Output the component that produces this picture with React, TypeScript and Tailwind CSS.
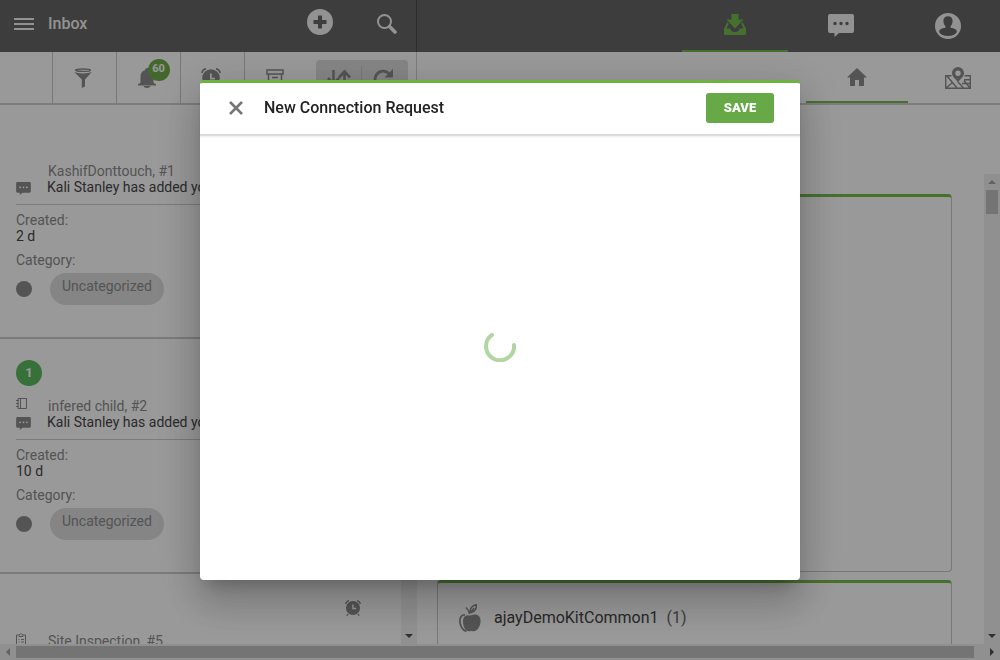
import type { ReactNode } from "react";

type IconProps = { className?: string };

const MenuIcon = () => (
  <svg viewBox="0 0 20 14" className="h-[14px] w-5" fill="currentColor">
    <path d="M0 1h20v2H0zM0 6h20v2H0zM0 11h20v2H0z" />
  </svg>
);

const AddIcon = () => (
  <svg viewBox="0 0 26 26" className="size-[26px]" fill="currentColor" fillRule="evenodd">
    <path d="M13 0a13 13 0 1 1 0 26a13 13 0 0 1 0-26zM11 6.500v4.500H6.500v4H11v4.500h4V15h4.500v-4H15V6.500z" />
  </svg>
);

const SearchIcon = () => (
  <svg viewBox="0 0 20 20" className="size-5" fill="none" stroke="currentColor">
    <circle cx="7.500" cy="7.500" r="6.500" strokeWidth="2" />
    <path d="M12.500 12.500l5.500 5.500" strokeWidth="3.600" strokeLinecap="round" />
  </svg>
);

const InboxIcon = () => (
  <svg viewBox="0 0 22 21" className="h-[21px] w-[22px]" fill="currentColor">
    <path d="M7.500 0h7v5.500h5L11 14.500L2.500 5.500h5z" />
    <path d="M3.500 8L0 14.800v4.700Q0 21 1.500 21h19q1.500 0 1.500-1.500v-4.700L18.500 8l-1.300 1.500l2.300 5H16l-1.500 2.500q-3.500 2-7 0L6 14.500H2.500l2.300-5z" />
  </svg>
);

const ChatIcon = ({ className = "" }: IconProps) => (
  <svg viewBox="0 0 26 23" className={className} fill="currentColor" fillRule="evenodd">
    <path d="M2 0h22q2 0 2 2v15q0 2-2 2H11l-4.500 4v-4H2q-2 0-2-2V2Q0 0 2 0zM7 7.800a1.700 1.700 0 1 0 0 3.400a1.700 1.700 0 0 0 0-3.400zM13 7.800a1.700 1.700 0 1 0 0 3.400a1.700 1.700 0 0 0 0-3.400zM19 7.800a1.700 1.700 0 1 0 0 3.400a1.700 1.700 0 0 0 0-3.400z" />
  </svg>
);

const AccountIcon = () => (
  <svg viewBox="0 0 26 26" className="size-[26px]" fill="currentColor" fillRule="evenodd">
    <path d="M13 0a13 13 0 1 1 0 26a13 13 0 0 1 0-26zM13 3.200c-3 0-4.600 2-4.600 4.700c0 2.300.8 4 2 5.200v1.600c-3.600.6-6.200 1.800-6.200 3.600c0 2.900 4.700 4.700 8.800 4.700s8.800-1.800 8.800-4.700c0-1.800-2.600-3-6.200-3.600v-1.600c1.200-1.200 2-2.900 2-5.200c0-2.700-1.600-4.700-4.600-4.700z" />
  </svg>
);

const FilterIcon = () => (
  <svg viewBox="0 0 18 20" className="h-5 w-[18px]" fill="currentColor">
    <ellipse cx="9" cy="2.200" rx="7.400" ry="1.200" fill="none" stroke="currentColor" strokeWidth="1.400" />
    <path d="M.2 4q3 1.400 8.800 1.400T17.800 4L11 11.500v7L7.800 20v-8.500z" />
  </svg>
);

const BellIcon = () => (
  <svg viewBox="0 0 18 20" className="h-5 w-[18px]" fill="currentColor">
    <path d="M9 0q2 0 2 2.300q4.500 1.200 4.500 6.200v5.500q0 1.500 2.500 2v1.500H0V16q2.500-.5 2.500-2V8.500Q2.500 3.500 7 2.300Q7 0 9 0z" />
    <path d="M5.500 18h7q-.5 2-3.500 2t-3.500-2z" />
  </svg>
);

const AlarmIcon = ({ className = "" }: IconProps) => (
  <svg viewBox="0 0 20 20" className={className} fill="currentColor" fillRule="evenodd">
    <path d="M10 1.200a8.800 8.800 0 1 1 0 17.600a8.800 8.800 0 0 1 0-17.600zM9 5.500v6h5v-1.800H10.800V5.500z" />
    <path d="M.8 5Q1.500 1.500 5 .8M19.200 5Q18.500 1.500 15 .8M4 17.500l-2 2M16 17.500l2 2" fill="none" stroke="currentColor" strokeWidth="1.600" />
  </svg>
);

const ArchiveIcon = () => (
  <svg viewBox="0 0 18 18" className="size-[18px]" fill="none" stroke="currentColor" strokeWidth="1.500">
    <path d="M1 1h16v4H1zM2.500 5v12h13V5M6 8.500h6" />
  </svg>
);

const SortIcon = () => (
  <svg viewBox="0 0 24 18" className="h-[18px] w-6" fill="none" stroke="currentColor" strokeWidth="2.600">
    <path d="M6.500 1v14M1 9l5.500 6l5.500-6M17.500 17V3M12 8.500l5.500-6l5.500 6" />
  </svg>
);

const RefreshIcon = () => (
  <svg viewBox="0 0 20 20" className="size-5" fill="none" stroke="currentColor" strokeWidth="2.800">
    <path d="M16.500 6.500A8 8 0 1 0 18 12" />
    <path d="M20 1v8.500h-8.500z" fill="currentColor" stroke="none" />
  </svg>
);

const HomeIcon = () => (
  <svg viewBox="0 0 20 18" className="h-[18px] w-5" fill="currentColor">
    <path d="M10 0l10 9.500h-3V18h-5v-6H8v6H3V9.500H0z" />
  </svg>
);

const MapIcon = () => (
  <svg viewBox="0 0 26 22" className="h-[22px] w-[26px]" fill="none" stroke="currentColor" strokeWidth="1.400">
    <path d="M6.500 8.700H.7v12.600h24.600V8.700h-5.800M2 9l10 12M7.500 15.500L1 21M13 15l5.500 6M25 12.700h-6M25 16.500h-8M19 13.500l6 7.500" />
    <path d="M13 0a6 6 0 0 1 6 6c0 4-4 6-6 9.500C11 12 7 10 7 6a6 6 0 0 1 6-6zM13 3.500a2.700 2.700 0 1 0 0 5.400a2.700 2.700 0 0 0 0-5.400z" fill="currentColor" fillRule="evenodd" stroke="none" />
  </svg>
);

const NotebookIcon = () => (
  <svg viewBox="0 0 11 11" className="size-[11px]" fill="none" stroke="currentColor">
    <path d="M2 .5h8.500v10H2zM4.500 .5v10M0 2.500h3M0 5.500h3M0 8.500h3" />
  </svg>
);

const ClipboardIcon = () => (
  <svg viewBox="0 0 10 13" className="h-[13px] w-[10px]" fill="none" stroke="currentColor">
    <path d="M2.500 2H.5v10.500h9V2h-2M3 3.500h4v-2H6L5 .5l-1 1H3zM2.500 6.500h1M5 6.500h3M2.500 9h1M5 9h3" />
  </svg>
);

const AppleIcon = () => (
  <svg viewBox="0 0 22 28" className="h-7 w-[22px]" fill="currentColor">
    <path d="M8.500 11.200q2.500 1 5.500-.4c4-1.400 7.600 1.200 7.600 6c0 6-3.800 11-7.200 10.400q-2-.6-3.800 0c-5 .8-7-7-6.600-11q.6-4.600 4.500-5z" />
    <path d="M6 10.800C2 10.600.9 14 .9 17c0 4.500 3 10 6.600 10.200" fill="none" stroke="currentColor" strokeWidth="1.800" />
    <path d="M10.500 10Q10 6 7 3.500M11 8.500Q11 2 17.200.8Q18 7 11.500 8.800L15 4" fill="none" stroke="currentColor" strokeWidth="1.500" />
  </svg>
);

const CloseIcon = () => (
  <svg viewBox="0 0 14 14" className="size-[14px]" fill="none" stroke="currentColor" strokeWidth="2.600">
    <path d="M1 1l12 12M13 1L1 13" />
  </svg>
);

const Spinner = () => (
  <svg viewBox="0 0 32 32" className="size-8" fill="none" stroke="#b1d6a3" strokeWidth="4" strokeLinecap="round" role="status">
    <path d="M8 4.800A14 14 0 1 0 30 15" />
  </svg>
);

const arrowPaths = {
  up: "M4 10l4-4l4 4z",
  down: "M4 6l4 4l4-4z",
  left: "M10 4l-4 4l4 4z",
  right: "M6 4l4 4l-4 4z",
};

function ScrollArrow({ dir, active = false }: { dir: keyof typeof arrowPaths; active?: boolean }) {
  return (
    <svg viewBox="0 0 16 16" className={active ? "size-4 shrink-0 text-[#505050]" : "size-4 shrink-0 text-[#a3a3a3]"} fill="currentColor">
      <path d={arrowPaths[dir]} />
    </svg>
  );
}

function VerticalScrollbar({ thumb }: { thumb: string }) {
  return (
    <div className="flex w-4 shrink-0 flex-col bg-[#f1f1f1]">
      <ScrollArrow dir="up" />
      <div className="flex-1 px-0.5">
        <div className={`bg-[#c1c1c1] ${thumb}`} />
      </div>
      <ScrollArrow dir="down" active />
    </div>
  );
}

function Tool({ label, children }: { label: string; children: ReactNode }) {
  return (
    <button aria-label={label} className="flex h-full w-16 items-center justify-center border-l border-[#c8c8c8] pr-1">
      {children}
    </button>
  );
}

type Item = { name: string; icon?: ReactNode; count?: number; alarm?: boolean; age: string };

const items: Item[] = [
  { name: "KashifDonttouch, #1", age: "2 d" },
  { name: "infered child, #2", icon: <NotebookIcon />, count: 1, age: "10 d" },
  { name: "Site Inspection, #5", icon: <ClipboardIcon />, alarm: true, age: "" },
];

function InboxItem({ item }: { item: Item }) {
  return (
    <li className="border-b-2 border-[#cdcdcd] px-4 pb-8 text-[14px] leading-4 text-[#8c8c8c]">
      <div className="flex h-[59px] items-center justify-between pt-2">
        {item.count ? (
          <span className="flex size-[26px] items-center justify-center rounded-full bg-[#5cbb60] text-[13px] font-bold text-white">{item.count}</span>
        ) : (
          <span />
        )}
        {item.alarm && <AlarmIcon className="mr-6 size-4" />}
      </div>
      <div className="flex h-4">
        <span className="w-8">{item.icon}</span>
        <span>{item.name}</span>
      </div>
      {item.age && (
        <>
          <div className="flex h-[26px] border-b border-[#cdcdcd]">
            <span className="w-[31px] pt-[3px]">
              <ChatIcon className="h-[13px] w-[15px]" />
            </span>
            <span className="text-[#484848]">Kali Stanley has added you</span>
          </div>
          <dl className="pt-[7px]">
            <dt>Created:</dt>
            <dd className="mb-2 text-[#484848]">{item.age}</dd>
            <dt>Category:</dt>
            <dd className="mt-[5px] flex items-center gap-[18px]">
              <span className="size-4 rounded-full bg-[#8c8c8c]" />
              <span className="h-8 rounded-full bg-[#dedede] px-3 pt-[5px]">Uncategorized</span>
            </dd>
          </dl>
        </>
      )}
    </li>
  );
}

export default function App() {
  return (
    <div className="flex h-screen flex-col overflow-hidden bg-white font-['Roboto',sans-serif] text-[#8c8c8c]">
      <div className="flex min-h-0 flex-1">
        <section className="flex w-[417px] shrink-0 flex-col">
          <header className="flex h-[52px] shrink-0 items-center border-r border-[#4a4a4a] bg-[#676767] pr-[19px] pl-[14px] text-[#f4f4f4]">
            <button aria-label="Menu" className="pb-1"><MenuIcon /></button>
            <h1 className="ml-[14px] pb-1 text-[16px] leading-5 font-medium">Inbox</h1>
            <button aria-label="Add" className="ml-auto pb-2"><AddIcon /></button>
            <button aria-label="Search" className="ml-[44px] pb-1"><SearchIcon /></button>
          </header>
          <nav className="flex h-[53px] shrink-0 items-center border-r border-b-2 border-[#d0d0d0] pl-[52px]">
            <Tool label="Filter"><FilterIcon /></Tool>
            <Tool label="Notifications">
              <span className="relative">
                <BellIcon />
                <span className="absolute -top-[9px] left-[10px] flex size-[22px] items-center justify-center rounded-full bg-[#70ad4d] text-[11px] font-bold text-white">60</span>
              </span>
            </Tool>
            <Tool label="Reminders"><AlarmIcon className="size-5" /></Tool>
            <Tool label="Archive"><ArchiveIcon /></Tool>
            <div className="mr-2 ml-auto flex h-9 items-center rounded bg-[#dedede]">
              <button aria-label="Sort" className="flex h-6 w-[46px] items-center justify-center border-r border-[#c8c8c8]"><SortIcon /></button>
              <button aria-label="Refresh" className="flex h-6 w-[46px] items-center justify-center pr-1"><RefreshIcon /></button>
            </div>
          </nav>
          <div className="flex min-h-0 flex-1">
            <ul className="-mt-px min-w-0 flex-1 overflow-hidden">
              {items.map((item) => (
                <InboxItem key={item.name} item={item} />
              ))}
            </ul>
            <VerticalScrollbar thumb="h-16" />
          </div>
        </section>

        <section className="flex min-w-0 flex-1 flex-col">
          <header className="flex h-[52px] shrink-0 justify-end bg-[#676767] text-[#f4f4f4]">
            <button aria-label="Inbox" className="flex w-[106px] items-center justify-center border-b-2 border-[#76bb4e] pb-0.5 text-[#76bb4e]"><InboxIcon /></button>
            <button aria-label="Messages" className="flex w-[106px] items-center justify-center pb-0.5"><ChatIcon className="h-[23px] w-[26px]" /></button>
            <button aria-label="Account" className="flex w-[106px] items-center justify-center pl-0.5"><AccountIcon /></button>
          </header>
          <nav className="flex h-[53px] shrink-0 justify-end border-b-2 border-[#d0d0d0]">
            <button aria-label="Home" className="flex w-[102px] items-center justify-center border-b-2 border-[#76bb4e]"><HomeIcon /></button>
            <button aria-label="Map" className="flex w-[92px] items-center justify-center pl-2"><MapIcon /></button>
          </nav>
          <div className="mt-[69px] flex min-h-0 flex-1">
            <div className="min-w-0 flex-1 overflow-hidden pt-5 pr-8 pl-5">
              <article className="mb-2 h-[378px] rounded border border-t-3 border-[#c8c8c8] border-t-[#76bb4e]" />
              <article className="flex h-[378px] items-start rounded border border-t-3 border-[#c8c8c8] border-t-[#76bb4e] pt-[21px] pl-[21px]">
                <AppleIcon />
                <h2 className="ml-[13px] pt-0.5 text-[16px] leading-6 text-[#444]">
                  ajayDemoKitCommon1 <span className="ml-1 text-[#666]">(1)</span>
                </h2>
              </article>
            </div>
            <VerticalScrollbar thumb="h-6" />
          </div>
        </section>
      </div>
      <div className="flex h-4 shrink-0 items-center bg-[#f1f1f1]">
        <ScrollArrow dir="left" />
        <div className="mr-[10px] h-3 flex-1 bg-[#c1c1c1]" />
        <ScrollArrow dir="right" active />
      </div>

      <div className="fixed inset-0 flex items-center justify-center bg-black/40">
        <div
          role="dialog"
          aria-labelledby="dialog-title"
          className="flex h-[500px] w-[600px] flex-col rounded border-t-3 border-[#6cb33f] bg-white shadow-[0_11px_15px_-7px_rgba(0,0,0,0.2),0_24px_38px_3px_rgba(0,0,0,0.14),0_9px_46px_8px_rgba(0,0,0,0.12)]"
        >
          <div className="flex h-[53px] shrink-0 items-center border-b-2 border-[#dcdcdc] pr-[26px] pb-0.5 pl-[29px] shadow-[0_1px_2px_rgba(0,0,0,0.08)]">
            <button aria-label="Close" className="text-[#777]"><CloseIcon /></button>
            <h2 id="dialog-title" className="ml-[21px] text-[16px] leading-6 font-medium text-[#222]">New Connection Request</h2>
            <button className="ml-auto h-[30px] w-[68px] rounded-[3px] bg-[#66a946] text-[13px] font-black text-white">SAVE</button>
          </div>
          <div className="flex flex-1 items-center justify-center pb-6">
            <Spinner />
          </div>
        </div>
      </div>
    </div>
  );
}
